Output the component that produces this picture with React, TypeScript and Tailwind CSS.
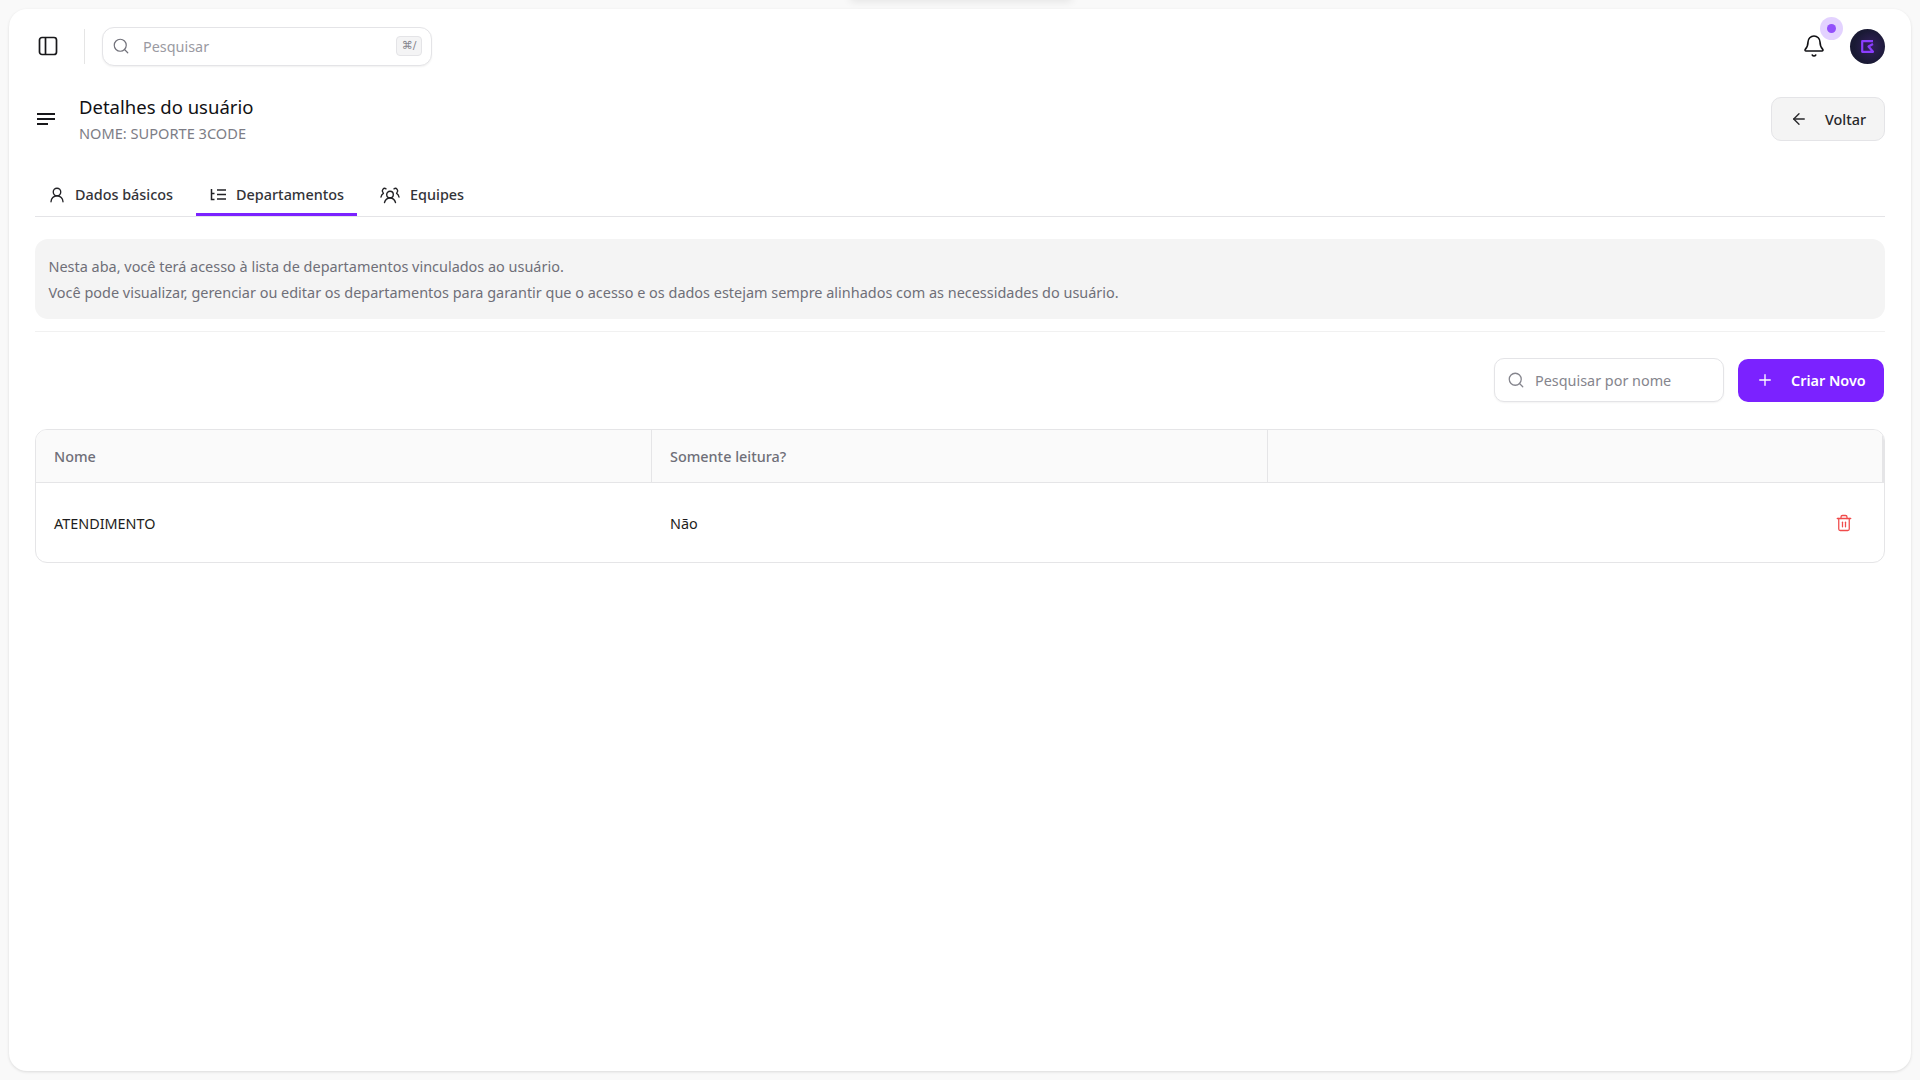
import React from "react";
import { ArrowLeft, Bell, Plus, Search, Trash2, UserRound } from "lucide-react";

const font = "font-['Noto_Sans','Open_Sans',sans-serif]";

function Tab({ icon, label, active, className }: { icon: React.ReactNode; label: string; active?: boolean; className: string }) {
  return (
    <div className={`flex h-[39px] items-center border-b-[3px] pb-[1px] ${active ? "border-[#7b22ff]" : "border-transparent"} ${className}`}>
      {icon}
      <span className="text-[14.4px] font-medium text-[#333338]">{label}</span>
    </div>
  );
}

export default function App() {
  return (
    <div className={`relative h-[1080px] w-[1920px] overflow-hidden bg-[#f9f9f9] p-[9px] ${font}`}>
      <div className="absolute -top-[6px] left-[850px] h-[6px] w-[222px] rounded-full bg-white shadow-[0_0_10px_rgba(0,0,0,0.14)]" />
      <div className="flex h-[1062px] flex-col rounded-[18px] bg-white px-[26px] shadow-[0_1px_3px_rgba(0,0,0,0.12)]">
        <header className="flex h-[57px] shrink-0 items-end">
          <div className="flex h-[40px] w-full items-center">
            <svg className="ml-[3px] h-[20px] w-[20px] text-[#18181b]" viewBox="0 0 20 20" fill="none" stroke="currentColor" strokeWidth="1.7">
              <rect x="1.5" y="1.5" width="17" height="17" rx="2.5" />
              <path d="M7.5 1.5v17" />
            </svg>
            <div className="ml-[26px] h-[35px] w-px bg-[#e5e5e5]" />
            <div className="ml-[17px] flex h-[39px] w-[330px] items-center rounded-[12px] border border-[#e4e4e7] bg-white pl-[9px] pr-[9px] shadow-[0_1px_2px_rgba(0,0,0,0.06)]">
              <Search className="h-[18px] w-[18px] text-[#71717a]" strokeWidth={1.6} />
              <span className="ml-[13px] flex-1 pt-[2px] text-[14.4px] text-[#9a9aa2]">Pesquisar</span>
              <span className="flex h-[20px] w-[26px] items-center justify-center rounded-[4px] border border-[#e4e4e7] bg-[#f4f4f5] font-['DejaVu_Sans',sans-serif] text-[11px] text-[#85858d]">⌘/</span>
            </div>
            <div className="relative ml-auto flex items-center">
              <Bell className="mr-[24px] h-[24px] w-[24px] text-[#111114]" strokeWidth={1.6} />
              <span className="absolute -top-[12px] left-[18px] flex h-[23px] w-[23px] items-center justify-center rounded-full bg-[#e3d2ff]">
                <span className="h-[9px] w-[9px] rounded-full bg-[#9250fb]" />
              </span>
              <span className="flex h-[35px] w-[35px] items-center justify-center rounded-full bg-[radial-gradient(circle_at_60%_50%,#35205f_0%,#1a1a35_60%,#17172e_100%)]">
                <svg className="h-[15px] w-[15px]" viewBox="0 0 15 15" fill="none" stroke="#8b3dff" strokeWidth="2.2">
                  <path d="M13 2.2H2.2v10.6H13L8.5 7.500 13 5" strokeLinejoin="round" />
                </svg>
              </span>
            </div>
          </div>
        </header>

        <section className="mt-[31px] flex h-[44px] shrink-0 items-center">
          <svg className="ml-[2px] h-[14px] w-[19px] text-[#18181b]" viewBox="0 0 19 14" fill="none" stroke="currentColor" strokeWidth="2">
            <path d="M0 2h18M0 7h18M0 12h11" />
          </svg>
          <div className="ml-[23px] pt-[2px]">
            <h1 className="text-[18.5px] leading-[26px] text-[#111114]">Detalhes do usuário</h1>
            <p className="text-[14.6px] leading-[26px] text-[#7d7d86]">NOME: SUPORTE 3CODE</p>
          </div>
          <button className="ml-auto flex h-[44px] w-[114px] items-center rounded-[10px] border border-[#e4e4e7] bg-[#f4f4f4] pl-[18px] text-[14.4px] font-medium text-[#27272a]">
            <ArrowLeft className="mr-[17px] h-[18px] w-[18px]" strokeWidth={1.8} />
            <span className="pt-[1px]">Voltar</span>
          </button>
        </section>

        <nav className="mt-[35px] flex h-[41px] shrink-0 items-end border-b border-[#e4e4e7]">
          <Tab
            className="pl-[13px] pr-[23px]"
            label="Dados básicos"
            icon={<UserRound className="mr-[9px] h-[18px] w-[18px] text-[#222226]" strokeWidth={1.8} />}
          />
          <Tab
            active
            className="w-[161px] pl-[14px]"
            label="Departamentos"
            icon={
              <svg className="mr-[10px] h-[14px] w-[16px] text-[#222226]" viewBox="0 0 16 14" fill="none" stroke="currentColor" strokeWidth="1.5">
                <path d="M1.500 1v10.500h3M1 5.500h3.500M7 2h9M7 6.500h9M7 11h9" />
              </svg>
            }
          />
          <Tab
            className="pl-[23px]"
            label="Equipes"
            icon={
              <svg className="mr-[10px] h-[18px] w-[20px] text-[#222226]" viewBox="0 0 20 18" fill="none" stroke="currentColor" strokeWidth="1.4" strokeLinecap="round">
                <circle cx="10" cy="8.500" r="3.300" />
                <path d="M4.500 16.500c.8-2.600 3-4.500 5.500-4.500s4.700 1.900 5.500 4.500" />
                <path d="M6 2.800a2.400 2.400 0 0 0-3 3.700M1 11c.3-1.800 1.100-3 2.400-3.700M14 2.800a2.400 2.400 0 0 1 3 3.700M19 11c-.3-1.800-1.100-3-2.400-3.700" />
              </svg>
            }
          />
        </nav>

        <div className="mt-[22px] h-[80px] shrink-0 rounded-[13px] bg-[#f4f4f4] pl-[13.500px] pr-[14px] pt-[15px] text-[14.45px] leading-[26px] text-[#6f6f78]">
          <p>Nesta aba, você terá acesso à lista de departamentos vinculados ao usuário.</p>
          <p>Você pode visualizar, gerenciar ou editar os departamentos para garantir que o acesso e os dados estejam sempre alinhados com as necessidades do usuário.</p>
        </div>
        <div className="mt-[12px] h-px shrink-0 bg-[#f1f1f1]" />

        <div className="mt-[26px] flex shrink-0 items-center justify-end pr-px">
          <div className="flex h-[44px] w-[230px] items-center rounded-[10px] border border-[#e4e4e7] bg-white pl-[12px] shadow-[0_1px_2px_rgba(0,0,0,0.05)]">
            <Search className="h-[18px] w-[18px] text-[#85858d]" strokeWidth={1.7} />
            <span className="ml-[10px] pt-[2px] text-[14.4px] text-[#85858d]">Pesquisar por nome</span>
          </div>
          <button className="ml-[14px] flex h-[43px] w-[146px] items-center rounded-[10px] bg-[#7b22ff] pl-[18px] text-[14.4px] font-semibold text-white">
            <Plus className="mr-[17px] h-[18px] w-[18px]" strokeWidth={1.8} />
            <span className="pt-[1px]">Criar Novo</span>
          </button>
        </div>

        <div className="mt-[27px] shrink-0 overflow-hidden rounded-[12px] border border-[#e5e5e7] text-[14.4px]">
          <div className="grid h-[53px] grid-cols-[616px_616px_1fr] items-stretch border-b border-[#e5e5e7] bg-[#fafafa] font-medium text-[#6f6f78]">
            <div className="flex items-center border-r border-[#e5e5e7] pl-[18px] pt-[2px]">Nome</div>
            <div className="flex items-center border-r border-[#e5e5e7] pl-[18px] pt-[2px]">Somente leitura?</div>
            <div className="border-r-2 border-[#e5e5e7]" />
          </div>
          <div className="grid h-[79px] grid-cols-[616px_616px_1fr] items-center text-[#1d1d20]">
            <div className="pl-[18px] pt-[2px]">ATENDIMENTO</div>
            <div className="pl-[18px] pt-[2px]">Não</div>
            <div className="flex justify-end pr-[31px]">
              <Trash2 className="h-[18px] w-[18px] text-[#f04b4b]" strokeWidth={1.7} />
            </div>
          </div>
        </div>
      </div>
    </div>
  );
}
